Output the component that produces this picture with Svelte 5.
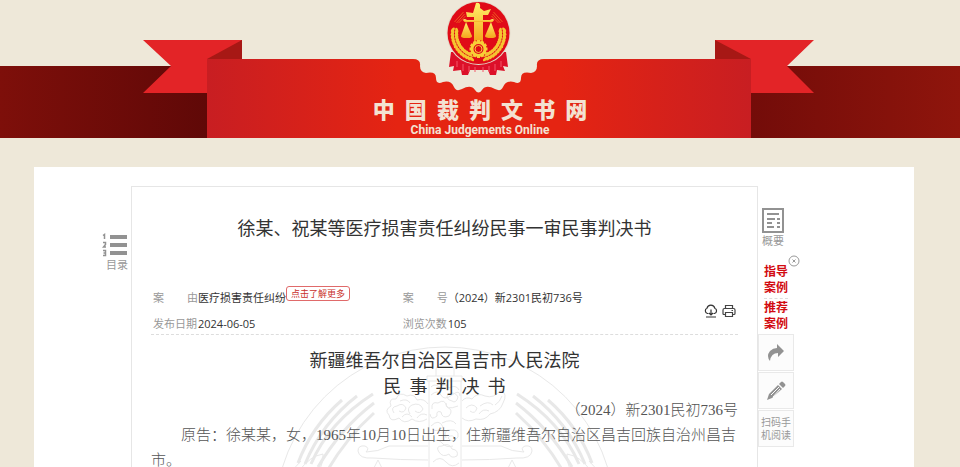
<script lang="ts">
	type Meta = {
		label: string;
		value: string;
		more?: boolean;
	};

	const meta: Meta[] = [
		{ label: '案由', value: '医疗损害责任纠纷', more: true },
		{ label: '案号', value: '（2024）新2301民初736号' },
		{ label: '发布日期', value: '2024-06-05' },
		{ label: '浏览次数', value: '105' }
	];

	const paragraphs = [
		'原告：徐某某，女，1965年10月10日出生，住新疆维吾尔自治区昌吉回族自治州昌吉市。'
	];

	let showCases = $state(true);

	// grains of the wheat wreath, in degrees around the emblem centre
	const grains = Array.from({ length: 13 }, (_, i) => 105 + i * 7).flatMap((deg) =>
		[22, 26].map((r) => {
			const a = (deg * Math.PI) / 180;
			return { x: r * Math.cos(a), y: r * Math.sin(a), turn: deg + (r === 22 ? 65 : 115) };
		})
	);
	const teeth = Array.from({ length: 12 }, (_, i) => i * 30);
</script>

<svelte:head>
	<title>中国裁判文书网</title>
</svelte:head>

<div class="page" lang="zh-CN">
	<header class="banner">
		<svg class="ribbon" viewBox="144 0 672 138" aria-hidden="true">
			<defs>
				<linearGradient id="ribbon-red">
					<stop offset="0" stop-color="#c81e22" />
					<stop offset="0.35" stop-color="#e52412" />
					<stop offset="0.65" stop-color="#e52412" />
					<stop offset="1" stop-color="#c81e22" />
				</linearGradient>
				<linearGradient id="gold" x2="0" y2="1">
					<stop offset="0" stop-color="#fff06a" />
					<stop offset="1" stop-color="#f5a51c" />
				</linearGradient>
			</defs>
			<path fill="#eee8d9" d="M400 59H557V110H400Z" />
			<path fill="#e32427" d="M143 40H242V93H143L171 66Z" />
			<path fill="#a71815" d="M242 40V59H207Z" />
			<path fill="#e32427" d="M814 40H715V93H814L787 66Z" />
			<path fill="#a71815" d="M715 40V59H751Z" />
			<path
				fill="url(#ribbon-red)"
				d="M207 59H413Q421 59 420 66Q420 72 426 73Q436 71 436 78Q436 85 443 82Q451 80 454 87Q456 92 462 89Q471 84 475 90Q478.500 95 482 90Q486 84 495 89Q501 92 503 87Q506 80 514 82Q521 85 521 78Q521 71 531 73Q537 72 537 66Q536 59 544 59H751V138H207Z"
			/>

			<path fill="#dc1029" d="M451 52L449 67L454 66L453 71L461 70L462 75H468L470 70H488L490 75H496L497 70L505 71L503 66L508 67L506 52Z" />
			<path fill="none" stroke="#f4576a" d="M457 61V67M463 64V71M469 66V72M475 67V72M483 67V72M489 66V72M495 64V71M501 61V67" />
			<circle cx="478.500" cy="33" r="32" fill="#e3d9c9" />
			<circle cx="478.500" cy="33" r="31" fill="#e00b17" />
			{#each [1, -1] as side}
				<g transform="translate(478.500 34) scale({side} 1)">
					{#each grains as g}
						<ellipse cx={g.x} cy={g.y} rx="2.800" ry="1.500" fill="#f5c531" transform="rotate({g.turn} {g.x} {g.y})" />
					{/each}
					<path d="M-24 -12L-15 -22M-22 -11L-14 -20M-20 -11L-13 -18" stroke="#ee5a20" fill="none" />
				</g>
			{/each}
			<g fill="url(#gold)">
				<path d="M476 3Q481 2 480 8L484 11L491 9L488 15H483V42H474V17H467L466 12L473 13Z" />
				<path d="M463 20Q464 18 467 20H490Q493 18 494 20Q493 23 489 22H468Q464 23 463 20Z" />
				<path d="M466 22L461 36Q461 38 466 38H468Q472 38 472 36Z" />
				<path d="M491 22L485 36Q485 38 491 38Q496 38 496 36Z" />
			</g>
			<g transform="translate(478.500 49)">
				<circle r="9" fill="#e00b17" />
				{#each teeth as deg}
					<rect x="-1.500" y="-9" width="3" height="3" fill="#f8cf37" transform="rotate({deg})" />
				{/each}
				<circle r="6.500" fill="none" stroke="#f8cf37" stroke-width="3" />
				<circle r="3.500" fill="none" stroke="#f8cf37" />
			</g>
		</svg>
		<div class="brand">
			<h1>中&nbsp;&nbsp;国&nbsp;&nbsp;裁&nbsp;&nbsp;判&nbsp;&nbsp;文&nbsp;&nbsp;书&nbsp;&nbsp;网</h1>
			<p>China Judgements Online</p>
		</div>
	</header>

	<main>
		<nav class="toc">
			<button class="plain">
				<svg width="26" height="24" viewBox="0 0 26 24" aria-hidden="true">
					<path stroke="#929292" stroke-width="4" d="M8 4H25M8 12H25M8 20H25" />
					<path
						fill="none"
						stroke="#929292"
						stroke-width="1.500"
						d="M1 2.500L2.500 1.500V6M1 9.500H3.500V11.500L1.500 14H4M1 17.500H3.500V22.500H1M1.500 20H3.500"
					/>
				</svg>
				<span>目录</span>
			</button>
		</nav>

		<article>
			<h2>徐某、祝某等医疗损害责任纠纷民事一审民事判决书</h2>

			<div class="meta">
				<dl>
					{#each meta as item}
						<div class="meta-item">
							<dt>
								{#if item.label.length === 2}
									<span>{item.label[0]}</span><span>{item.label[1]}</span>
								{:else}
									{item.label}
								{/if}
							</dt>
							<dd>
								{item.value}
							</dd>
							{#if item.more}
								<button class="more">点击了解更多</button>
							{/if}
						</div>
					{/each}
				</dl>
				<div class="tools">
					<button class="plain" aria-label="下载">
						<svg width="14" height="14" viewBox="0 0 14 14" fill="none" stroke="#333" stroke-width="1.200">
							<path d="M4.500 9.500H3.500A2.800 2.800 0 0 1 3 4.200A4 4 0 0 1 10.800 4.200A2.800 2.800 0 0 1 10.500 9.500H9.500" />
							<path d="M7 5.500V11M5 9L7 11L9 9M2 13H12" />
						</svg>
					</button>
					<button class="plain" aria-label="打印">
						<svg width="14" height="14" viewBox="0 0 14 14" fill="none" stroke="#444" stroke-width="1.200">
							<path d="M3.500 4.500V1.500H10.500V4.500M3.500 10.500H2Q1 10.500 1 9.500V6Q1 4.500 2.500 4.500H11.500Q13 4.500 13 6V9.500Q13 10.500 12 10.500H10.500" />
							<path d="M3.500 8.500H10.500V12.500H3.500ZM9.500 6.500H11" />
						</svg>
					</button>
				</div>
			</div>

			<section class="document">
				<!-- Court emblem watermark -->
				<svg class="watermark" viewBox="274 347 342 342" aria-hidden="true">
					<circle cx="445" cy="518" r="170" />
					<path d="M436 377V370Q438 364 445 364Q452 364 454 370V377M427 377H462V382H427ZM429 382V690M461 382V690" />
					<path d="M431 388Q435 384 439 388Q445 383 449 389Q456 385 459 391M431 396Q438 390 441 396T452 396T460 397M452 402Q445 400 448 395Q455 392 458 398Q456 405 452 402ZM458 407Q445 412 446 404M432 410Q431 402 438 404Q445 399 447 408Q454 411 449 417Q442 420 441 413Q436 411 437 417Q431 422 430 415M442 424Q452 419 456 425M431 427Q439 419 443 428Q437 434 432 430M446 439Q443 430 451 431Q459 430 458 438Q453 445 448 439Q451 435 454 438M433 443Q438 439 442 444T453 447M439 453Q435 447 442 447Q449 443 452 450Q459 451 457 457Q451 460 449 455Q443 459 439 453ZM433 463Q440 456 446 463T459 464" />
					<path d="M427 420Q419 425 412 420Q404 426 399 419Q390 424 389 416Q384 411 391 407Q388 399 396 400Q399 392 407 397Q414 394 417 401Q424 399 428 405M394 414Q390 408 397 407Q403 403 406 409Q404 415 399 412M410 415Q406 409 412 406Q420 403 423 410Q420 416 415 412M400 402Q407 399 410 404M402 418Q407 412 412 418M417 419Q421 413 427 416" />
					<path d="M462 402Q466 397 472 400Q477 393 485 397Q494 400 501 391Q508 395 503 404Q500 413 490 415Q485 422 476 420Q468 424 462 419M466 409Q472 403 477 409Q475 416 470 412M480 407Q488 401 493 406M479 415Q483 409 489 412M495 406Q500 403 502 397" />
					{#each ['', 'translate(890 0) scale(-1 1)'] as flip}
						<g transform={flip}>
							<path d="M428 461Q401 461 373 459Q359 460 358 452Q358 446 365 447Q370 449 366 453Q378 453 389 447H428M378 461L358 500M378 461L397 500" />
							<g class="straw">
								<path d="M342 401Q312 427 298 464M357 397Q322 424 305 465M373 395Q329 423 311 465M374 404Q341 429 318 468M374 414Q347 438 327 472" />
							</g>
							<path d="M299 472Q310 457 323 455Q324 467 314 478M299 472L323 484M292 489Q289 472 301 462" />
						</g>
					{/each}
				</svg>
				<h3>新疆维吾尔自治区昌吉市人民法院<br />民&nbsp;&nbsp;事&nbsp;&nbsp;判&nbsp;&nbsp;决&nbsp;&nbsp;书</h3>
				<p class="case-number">（2024）新2301民初736号</p>
				{#each paragraphs as text}
					<p class="text">{text}</p>
				{/each}
			</section>
		</article>

		<aside>
			<button class="plain summary">
				<svg width="22" height="25" viewBox="0 0 22 25" aria-hidden="true">
					<path fill="none" stroke="#929292" stroke-width="2" d="M1 1H21V24H1Z" />
					<path fill="none" stroke="#929292" stroke-width="2" d="M5 6H17M5 11H13M5 15H10M5 19H12M15 11H18M15 15H18M15 19H18" />
				</svg>
				<span>概要</span>
			</button>
			<div class="cases">
				{#if showCases}
					<a href="#guiding">指导<br />案例</a>
					<a href="#recommended">推荐<br />案例</a>
					<button class="plain close" aria-label="关闭" onclick={() => (showCases = false)}>
						<svg width="12" height="12" viewBox="0 0 12 12" fill="none" stroke="#999">
							<circle cx="6" cy="6" r="5" />
							<path d="M4.500 4.500L7.500 7.500M7.500 4.500L4.500 7.500" />
						</svg>
					</button>
				{/if}
			</div>
			<div class="tiles">
				<button aria-label="分享">
					<svg width="18" height="20" viewBox="0 0 18 20" fill="#929292">
						<path d="M10 1L17 8L11 14V10Q4 10 3 18Q-1 13 3 8Q6 5 10 5Z" />
					</svg>
				</button>
				<button aria-label="纠错">
					<svg width="20" height="20" viewBox="0 0 20 20" fill="#929292">
						<path d="M13 3L15 1Q16 0 17 1L19 3Q20 4 19 5L17 7ZM12 4L16 8L6 17L1 19L3 13Z" />
						<path stroke="#fcfcfc" d="M5 14L13 6M7 16L14 8" />
					</svg>
				</button>
				<button>扫码手<br />机阅读</button>
			</div>
		</aside>
	</main>
</div>

<style>
	:global(body) {
		margin: 0;
		background: #eee8d9;
	}

	.page {
		display: flex;
		flex-direction: column;
		min-height: 100vh;
		color: #333;
		font-family: 'Open Sans', 'Noto Sans CJK SC', sans-serif;
		font-size: 11px;
		line-height: 16px;
	}

	h1,
	h2,
	h3,
	p,
	dl,
	dd {
		margin: 0;
	}

	button {
		padding: 0;
		font: inherit;
		cursor: pointer;
	}

	svg {
		display: block;
	}

	.plain {
		border: none;
		background: none;
		color: #999;
	}

	.banner {
		display: grid;
		justify-items: center;
		background:
			linear-gradient(to right, #7e0f0a, #5f0807 22%, #730c09 78%, #8f150c) bottom / 100% 72px
			no-repeat;
	}

	.ribbon,
	.brand {
		grid-area: 1 / 1;
	}

	.ribbon {
		width: 672px;
		overflow: visible;
	}

	.brand {
		align-self: end;
		color: #f3e2d2;
		text-align: center;
	}

	.brand h1 {
		font-family: 'Noto Sans CJK SC', sans-serif;
		font-size: 22px;
		font-weight: 900;
		line-height: 30px;
	}

	.brand p {
		font-family: Roboto, sans-serif;
		font-size: 12px;
		font-weight: 700;
		line-height: 15px;
	}

	main {
		display: grid;
		grid-template-columns: 97px 1fr 156px;
		flex: 1;
		margin: 29px 46px 0 34px;
		padding-top: 19px;
		background: #fff;
	}

	.toc {
		display: flex;
		justify-content: flex-end;
		align-items: flex-start;
		padding: 47px 3px 0 0;
	}

	.toc .plain {
		text-align: right;
	}

	article {
		display: flex;
		flex-direction: column;
		padding: 29px 19px 0;
		border: 1px solid #e6e6e6;
		border-bottom: none;
	}

	h2 {
		font-size: 18px;
		font-weight: 400;
		line-height: 24px;
		text-align: center;
	}

	.meta {
		display: flex;
		align-items: center;
		gap: 16px;
		margin-top: 50px;
		padding: 0 2px 2px;
		border-bottom: 1px dashed #ddd;
	}

	dl {
		display: grid;
		grid-template-columns: 7fr 8fr;
		row-gap: 10px;
		flex: 1;
	}

	.meta-item {
		display: flex;
	}

	dt {
		display: flex;
		justify-content: space-between;
		width: 45px;
		color: #999;
	}

	.more {
		align-self: flex-start;
		margin-top: -4px;
		padding: 0 4px;
		border: 1px solid #e06a6a;
		border-radius: 3px;
		background: #fff;
		color: #c9302c;
		font-size: 9px;
		line-height: 13px;
	}

	.tools {
		display: flex;
		gap: 4px;
	}

	.document {
		position: relative;
		flex: 1;
		padding-top: 11px;
		overflow: hidden;
	}

	.watermark {
		position: absolute;
		top: 11px;
		left: 50%;
		width: 342px;
		transform: translateX(-50%);
		fill: none;
		stroke: #e8e8e8;
		stroke-width: 1;
	}

	.straw {
		stroke-width: 3;
	}

	h3,
	.document p {
		position: relative;
	}

	h3 {
		font-family: 'Noto Sans CJK SC', sans-serif;
		font-size: 18px;
		font-weight: 400;
		line-height: 26px;
		text-align: center;
	}

	.document p {
		color: #555;
		font-family: 'Liberation Serif', 'Noto Sans CJK SC', serif;
		font-size: 15px;
		font-weight: 300;
		line-height: 25px;
	}

	.document .case-number {
		text-align: right;
	}

	.text {
		text-indent: 2em;
	}

	aside {
		display: flex;
		flex-direction: column;
		align-items: flex-start;
		padding-top: 22px;
	}

	.summary {
		padding-left: 4px;
		text-align: left;
	}

	.cases {
		position: relative;
		margin-top: 14px;
		padding: 0 6px;
	}

	.cases a {
		display: block;
		padding: 1px 0 2px;
		color: #d20a10;
		font-size: 12px;
		font-weight: 700;
		text-decoration: none;
	}

	.cases a + a {
		border-top: 1px dashed #ddd;
	}

	.close {
		position: absolute;
		top: -8px;
		right: -6px;
	}

	.tiles {
		display: grid;
		gap: 1px;
	}

	.tiles button {
		display: grid;
		place-items: center;
		width: 36px;
		height: 37px;
		border: 1px solid #e9e9e9;
		background: #fcfcfc;
		color: #999;
		font-size: 10px;
		line-height: 13px;
	}
</style>
